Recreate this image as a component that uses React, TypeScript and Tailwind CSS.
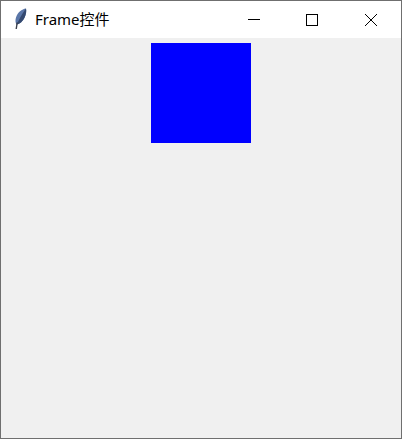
function Feather() {
  return (
    <svg width="14" height="22" viewBox="0 0 14 22" className="shrink-0">
      <path d="M12 0.5C8 1 3.5 4.5 2 9.5C1.2 12 1.3 14.5 2.5 16.5C6 16 9 13 10.6 9.5C12 6.5 12.6 3.5 12 0.5Z" fill="#5a76a8" />
      <path d="M12 0.5C9.5 4 6.5 8.5 5 12L2.5 16.5C6 16 9 13 10.6 9.5C12 6.5 12.6 3.5 12 0.5Z" fill="#34496f" />
      <path d="M3.2 14.5L2.2 21" stroke="#3a3f4a" strokeWidth="1.4" fill="none" />
    </svg>
  );
}

export default function App() {
  return (
    <div className="w-[402px] h-[439px] flex flex-col border border-[#6f6f6f] bg-[#f0f0f0] font-['Noto_Sans','Noto_Sans_CJK_SC',sans-serif]">
      {/* title bar */}
      <div className="h-[37px] bg-white flex items-center shrink-0">
        <div className="w-[34px] flex justify-end pr-[7px] mb-[2px]">
          <Feather />
        </div>
        <span className="text-[15px] text-black">Frame控件</span>
        <div className="ml-auto flex h-full">
          <button className="w-[58px] flex items-center justify-center">
            <svg width="12" height="12" viewBox="0 0 12 12">
              <path d="M0 5.5H12" stroke="#000" strokeWidth="1" />
            </svg>
          </button>
          <button className="w-[58px] flex items-center justify-center">
            <svg width="12" height="12" viewBox="0 0 12 12">
              <rect x="0.5" y="0.5" width="11" height="11" fill="none" stroke="#000" strokeWidth="1" />
            </svg>
          </button>
          <button className="w-[60px] flex items-center justify-center">
            <svg width="12" height="12" viewBox="0 0 12 12">
              <path d="M0 0L12 12M12 0L0 12" stroke="#000" strokeWidth="1" />
            </svg>
          </button>
        </div>
      </div>
      {/* window body */}
      <div className="flex-1 flex justify-center pt-[5px]">
        <div className="w-[100px] h-[100px] bg-[#0000ff]" />
      </div>
    </div>
  );
}
